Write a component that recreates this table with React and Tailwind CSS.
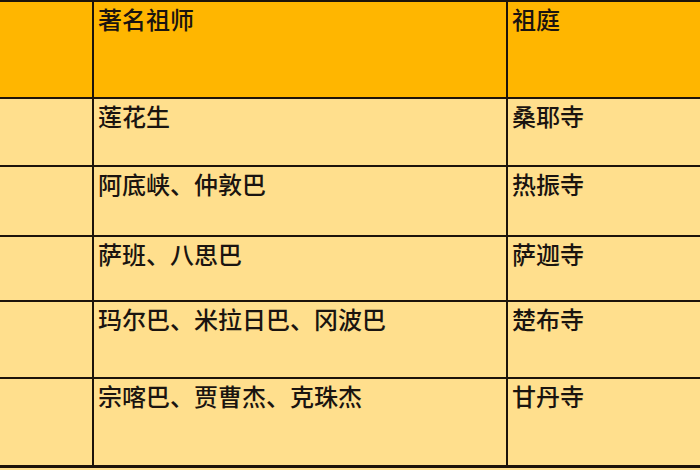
const rows = [
  { h: "h-[68px]", master: "莲花生", temple: "桑耶寺" },
  { h: "h-[70px]", master: "阿底峡、仲敦巴", temple: "热振寺" },
  { h: "h-[65px]", master: "萨班、八思巴", temple: "萨迦寺" },
  { h: "h-[77px]", master: "玛尔巴、米拉日巴、冈波巴", temple: "楚布寺" },
  { h: "h-[89px]", master: "宗喀巴、贾曹杰、克珠杰", temple: "甘丹寺", last: true },
];

function Row({ className, master, temple, last }) {
  return (
    <div className={`flex ${last ? "border-b-[3px]" : "border-b-2"} border-[#1c130a] ${className}`}>
      <div className="w-[94px] shrink-0 border-r-2 border-[#1c130a]" />
      <div className="w-[414px] shrink-0 border-r-2 border-[#1c130a] pl-[4px] pt-[5px]">{master}</div>
      <div className="flex-1 pl-[4px] pt-[5px]">{temple}</div>
    </div>
  );
}

export default function App() {
  return (
    <div
      className="w-[700px] h-[470px] overflow-hidden bg-[#ffdf8d] text-[24px] leading-[24px] font-medium text-[#1a1410] border-t-2 border-[#1c130a]"
      style={{ fontFamily: '"Noto Sans CJK SC", "Noto Sans", sans-serif' }}
    >
      <Row className="h-[97px] bg-[#ffb600]" master="著名祖师" temple="祖庭" />
      {rows.map((r) => (
        <Row key={r.temple} className={r.h} master={r.master} temple={r.temple} last={r.last} />
      ))}
    </div>
  );
}
